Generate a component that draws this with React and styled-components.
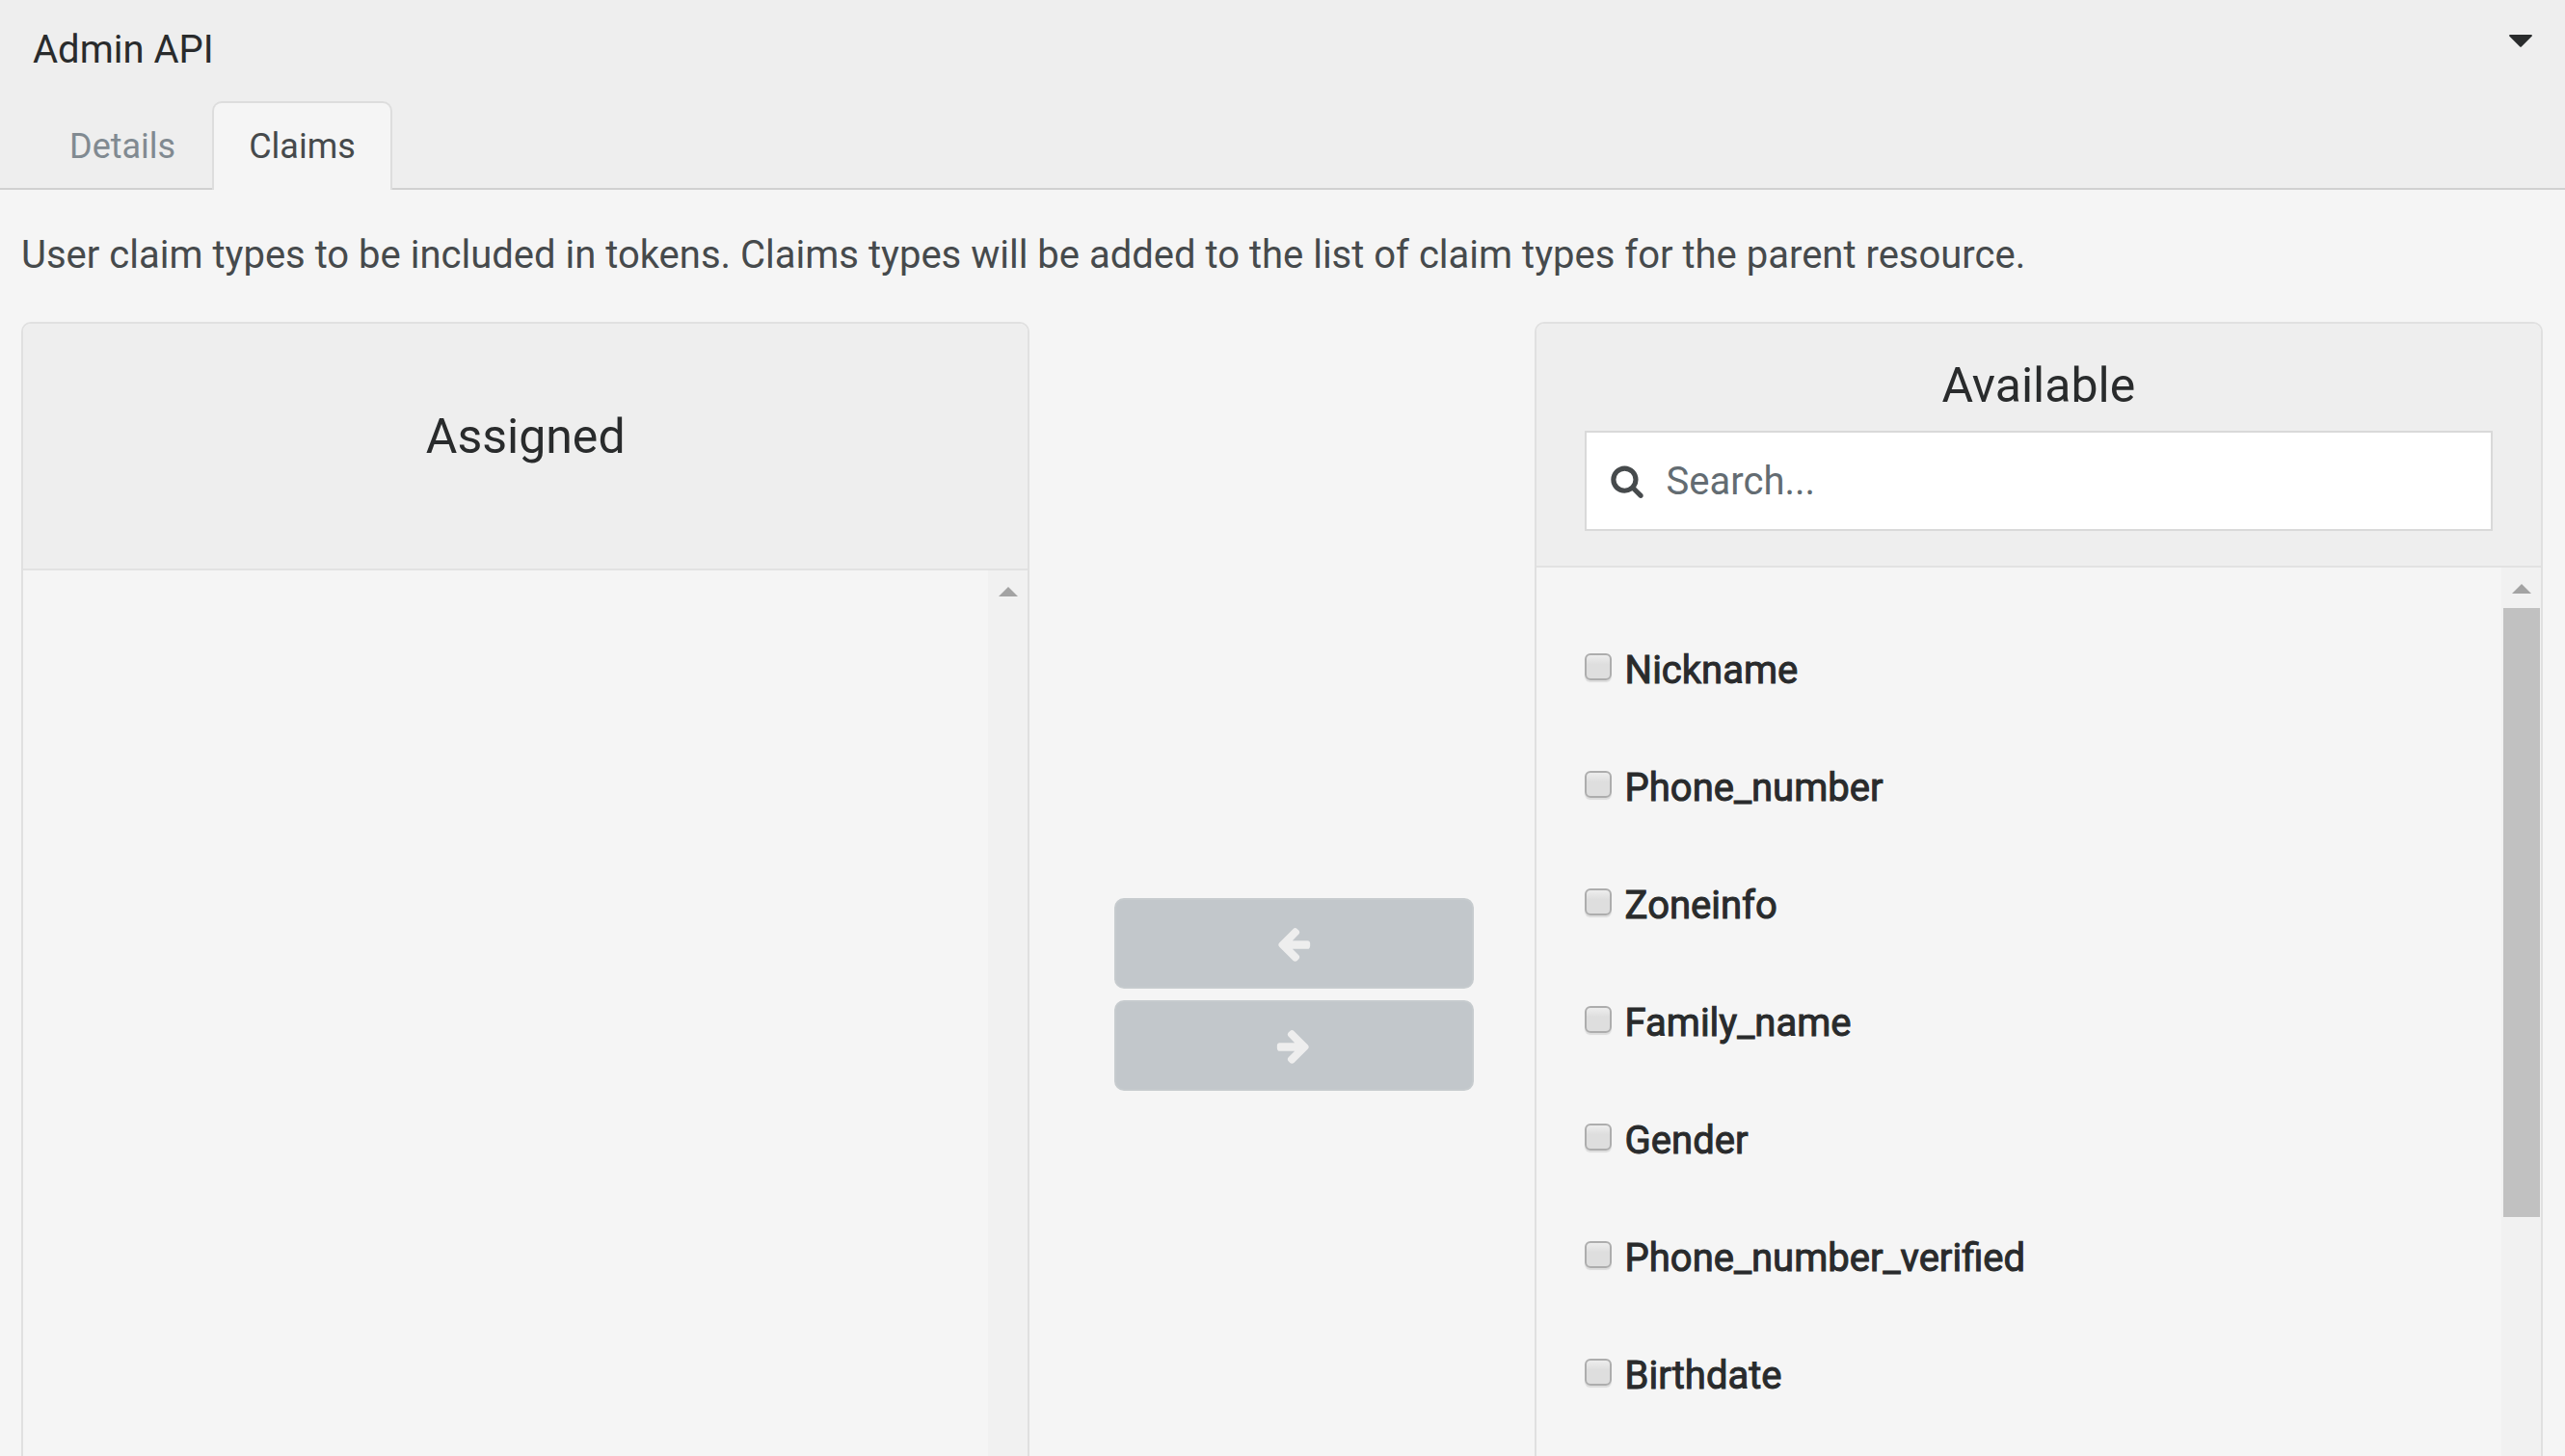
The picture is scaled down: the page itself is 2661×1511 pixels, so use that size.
import React, { useState } from "react";
import styled, { createGlobalStyle } from "styled-components";

const GlobalStyle = createGlobalStyle`
  *, *::before, *::after { box-sizing: border-box; }
  body {
    margin: 0;
    background: #f5f5f5;
    color: #292b2c;
    font-family: Roboto, "Liberation Sans", sans-serif;
    font-size: 40px;
    line-height: 48px;
  }
`;

const Page = styled.main`
  height: 100vh;
  overflow: hidden;
`;

const Header = styled.header`
  background: #eeeeee;
  border-bottom: 2px solid #d0d0d0;
`;

const TitleBar = styled.div`
  display: flex;
  justify-content: space-between;
  align-items: flex-start;
  padding: 28px 34px 29px;
`;

const Title = styled.h1`
  margin: 0;
  font-size: 40px;
  font-weight: 400;
  line-height: 48px;
`;

const CollapseButton = styled.button`
  display: flex;
  padding: 8px 0;
  border: 0;
  background: none;
  color: inherit;
`;

const Tabs = styled.nav`
  display: flex;
  padding: 0 34px;
  margin-bottom: -2px;
`;

const Tab = styled.a`
  padding: 24px 36px;
  border: 2px solid ${(p) => (p.$active ? "#dddddd" : "transparent")};
  border-bottom: 0;
  border-radius: 10px 10px 0 0;
  background: ${(p) => (p.$active ? "#f5f5f5" : "transparent")};
  color: ${(p) => (p.$active ? "#464a4c" : "#818a91")};
  font-size: 36px;
  line-height: 42px;
  text-decoration: none;
`;

const Content = styled.section`
  padding: 44px 23px 0 22px;
`;

const Intro = styled.p`
  margin: 0 0 45px;
  color: #464a4c;
`;

const Columns = styled.div`
  display: grid;
  grid-template-columns: 2fr 1fr 2fr;
`;

const Panel = styled.section`
  border: 2px solid #e0e0e0;
  border-radius: 10px;
  overflow: hidden;
`;

const PanelHead = styled.div`
  padding: ${(p) => (p.$tall ? "87px 50px 107px" : "34px 50px 36px")};
  border-bottom: 2px solid #e2e2e2;
  background: #eeeeee;
`;

const PanelTitle = styled.h2`
  margin: 0;
  font-size: 50px;
  font-weight: 400;
  line-height: 60px;
  text-align: center;
`;

const SearchBox = styled.label`
  display: flex;
  align-items: center;
  gap: 23px;
  height: 104px;
  margin-top: 17px;
  padding: 0 24px;
  border: 2px solid #d9d9d9;
  background: #ffffff;
  color: #464a4c;
`;

const SearchInput = styled.input`
  flex: 1;
  min-width: 0;
  padding: 2px 0 0;
  border: 0;
  outline: 0;
  background: transparent;
  color: #464a4c;
  font: inherit;
  &::placeholder { color: #636c72; opacity: 1; }
`;

const PanelBody = styled.div`
  display: flex;
  height: 1136px;
`;

const ClaimList = styled.ul`
  display: flex;
  flex: 1;
  flex-direction: column;
  gap: 74px;
  margin: 0;
  padding: 83px 50px 0;
  list-style: none;
`;

const ClaimLabel = styled.label`
  display: flex;
  align-items: flex-start;
  gap: 14px;
  -webkit-text-stroke: 1px currentColor;
`;

const Checkbox = styled.input`
  appearance: none;
  width: 28px;
  height: 28px;
  margin: 6px 0 0;
  border: 2px solid #adadad;
  border-radius: 6px;
  background: linear-gradient(#ededed, #dedede 40%, #dedede);
  box-shadow: 0 2px 1px #dcdcdc;
  &:checked { background: #818a91; }
`;

const ScrollTrack = styled.div`
  display: flex;
  flex-direction: column;
  align-items: center;
  gap: 15px;
  width: 41px;
  padding: 17px 1px 0 2px;
  background: #f1f1f1;
  color: #a3a3a3;
`;

const ScrollThumb = styled.div`
  align-self: stretch;
  height: 632px;
  background: #c1c1c1;
`;

const MoveButtons = styled.div`
  display: flex;
  flex-direction: column;
  justify-content: center;
  gap: 12px;
  padding: 0 63px 0 88px;
`;

const MoveButton = styled.button`
  display: flex;
  align-items: center;
  justify-content: center;
  height: 94px;
  border: 2px solid #c6cbce;
  border-radius: 10px;
  background: #c2c7cb;
  color: #eeeeee;
`;

const Glyph = ({ size, d }) => (
  <svg width={size} height={size} viewBox="0 0 1792 1792" fill="currentColor" aria-hidden="true">
    <path d={d} />
  </svg>
);

const ARROW_LEFT =
  "M1664 896v128q0 53-32.5 90.5t-84.5 37.5h-704l293 294q38 36 38 90t-38 90l-75 76q-37 37-90 37-52 0-91-37l-651-652q-37-37-37-90 0-52 37-91l651-650q38-38 91-38 52 0 90 38l75 74q38 38 38 91t-38 91l-293 293h704q52 0 84.5 37.5t32.5 90.5z";
const ARROW_RIGHT =
  "M1600 960q0 54-37 91l-651 651q-39 37-91 37-51 0-90-37l-75-75q-38-38-38-91t38-91l293-293h-704q-52 0-84.5-37.5t-32.5-90.5v-128q0-53 32.5-90.5t84.5-37.5h704l-293-294q-38-36-38-90t38-90l75-75q38-38 90-38 53 0 91 38l651 651q37 35 37 90z";
const SEARCH =
  "M1216 832q0-185-131.5-316.5t-316.5-131.5-316.5 131.5-131.5 316.5 131.5 316.5 316.5 131.5 316.5-131.5 131.5-316.5zm512 832q0 52-38 90t-90 38q-54 0-90-38l-343-342q-179 124-399 124-143 0-273.5-55.5t-225-150-150-225-55.5-273.5 55.5-273.5 150-225 225-150 273.5-55.5 273.5 55.5 225 150 150 225 55.5 273.5q0 220-124 399l343 343q37 37 37 90z";

const ScrollArrow = () => (
  <svg width="20" height="10" viewBox="0 0 20 10" fill="currentColor" aria-hidden="true">
    <path d="M0 10L10 0L20 10Z" />
  </svg>
);

const CLAIMS = [
  "Nickname",
  "Phone_number",
  "Zoneinfo",
  "Family_name",
  "Gender",
  "Phone_number_verified",
  "Birthdate",
];

export default function App() {
  const [query, setQuery] = useState("");
  const shown = CLAIMS.filter((c) => c.toLowerCase().includes(query.toLowerCase()));

  return (
    <Page>
      <GlobalStyle />
      <Header>
        <TitleBar>
          <Title>Admin API</Title>
          <CollapseButton type="button">
            <svg width="24" height="13" viewBox="0 0 24 13" fill="currentColor" aria-hidden="true">
              <path d="M1 0H23Q24.500 0.500 23.500 1.800L13 12.300Q12 13.300 11 12.300L0.500 1.800Q-0.500 0.500 1 0Z" />
            </svg>
          </CollapseButton>
        </TitleBar>
        <Tabs>
          <Tab href="#details">Details</Tab>
          <Tab href="#claims" $active>Claims</Tab>
        </Tabs>
      </Header>

      <Content>
        <Intro>
          User claim types to be included in tokens. Claims types will be added to the list of claim
          types for the parent resource.
        </Intro>
        <Columns>
          <Panel>
            <PanelHead $tall>
              <PanelTitle>Assigned</PanelTitle>
            </PanelHead>
            <PanelBody>
              <ClaimList />
              <ScrollTrack>
                <ScrollArrow />
              </ScrollTrack>
            </PanelBody>
          </Panel>

          <MoveButtons>
            <MoveButton type="button">
              <Glyph size={40} d={ARROW_LEFT} />
            </MoveButton>
            <MoveButton type="button">
              <Glyph size={40} d={ARROW_RIGHT} />
            </MoveButton>
          </MoveButtons>

          <Panel>
            <PanelHead>
              <PanelTitle>Available</PanelTitle>
              <SearchBox>
                <Glyph size={36} d={SEARCH} />
                <SearchInput
                  type="text"
                  placeholder="Search..."
                  value={query}
                  onChange={(e) => setQuery(e.target.value)}
                />
              </SearchBox>
            </PanelHead>
            <PanelBody>
              <ClaimList>
                {shown.map((claim) => (
                  <li key={claim}>
                    <ClaimLabel>
                      <Checkbox type="checkbox" />
                      {claim}
                    </ClaimLabel>
                  </li>
                ))}
              </ClaimList>
              <ScrollTrack>
                <ScrollArrow />
                <ScrollThumb />
              </ScrollTrack>
            </PanelBody>
          </Panel>
        </Columns>
      </Content>
    </Page>
  );
}
